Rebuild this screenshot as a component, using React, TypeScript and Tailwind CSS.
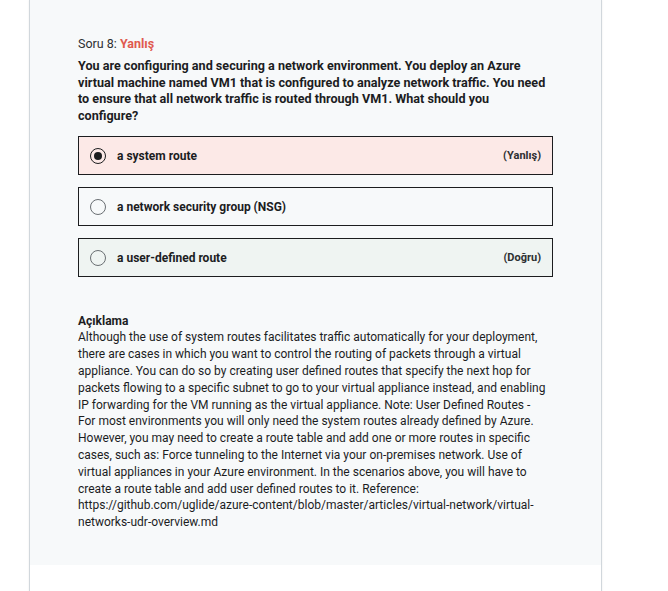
import React from "react";

const qLines = [
  "You are configuring and securing a network environment. You deploy an Azure",
  "virtual machine named VM1 that is configured to analyze network traffic. You need",
  "to ensure that all network traffic is routed through VM1. What should you",
  "configure?",
];

const expLines = [
  "Although the use of system routes facilitates traffic automatically for your deployment,",
  "there are cases in which you want to control the routing of packets through a virtual",
  "appliance. You can do so by creating user defined routes that specify the next hop for",
  "packets flowing to a specific subnet to go to your virtual appliance instead, and enabling",
  "IP forwarding for the VM running as the virtual appliance. Note: User Defined Routes -",
  "For most environments you will only need the system routes already defined by Azure.",
  "However, you may need to create a route table and add one or more routes in specific",
  "cases, such as: Force tunneling to the Internet via your on-premises network. Use of",
  "virtual appliances in your Azure environment. In the scenarios above, you will have to",
  "create a route table and add user defined routes to it. Reference:",
  "https://github.com/uglide/azure-content/blob/master/articles/virtual-network/virtual-",
  "networks-udr-overview.md",
];

function Radio({ checked }: { checked: boolean }) {
  return checked ? (
    <span className="flex h-[16px] w-[16px] items-center justify-center rounded-full border-[1.5px] border-[#1c1d1f]">
      <span className="h-[8px] w-[8px] rounded-full bg-[#1c1d1f]" />
    </span>
  ) : (
    <span className="h-[16px] w-[16px] rounded-full border border-[#6a6f73]" />
  );
}

function Option({
  label,
  checked,
  tag,
  bg,
}: {
  label: string;
  checked: boolean;
  tag?: string;
  bg: string;
}) {
  return (
    <div className={`flex h-[39px] items-center border border-[#1c1d1f] pl-[11px] pr-[11px] ${bg}`}>
      <Radio checked={checked} />
      <span className="ml-[11px] text-[12px] font-bold text-[#1c1d1f]">{label}</span>
      {tag && <span className="ml-auto text-[11px] font-bold text-[#2d2f31]">{tag}</span>}
    </div>
  );
}

export default function App() {
  return (
    <div className="h-[591px] w-[668px] overflow-hidden bg-white font-['Roboto','Liberation_Sans',sans-serif]">
      <div className="ml-[29px] w-[573px] border-x border-[#d1d7dc] shadow-[0_0_2px_rgba(0,0,0,0.08)]">
        <div className="bg-[#f7f9fa] pb-[34px] pl-[48px] pr-[48px] pt-[36px]">
          <div className="text-[12.5px] leading-[16px] text-[#2d2f31]">
            Soru 8: <span className="font-bold text-[#e05a4f]">Yanlış</span>
          </div>
          <div className="mt-[6px] text-[12.6px] font-bold leading-[16.6px] text-[#1c1d1f]">
            {qLines.map((l, i) => (
              <div key={i} className="whitespace-nowrap">{l}</div>
            ))}
          </div>
          <div className="mt-[12px] flex flex-col gap-[12px]">
            <Option label="a system route" checked tag="(Yanlış)" bg="bg-[#fce9e7]" />
            <Option label="a network security group (NSG)" checked={false} bg="bg-[#f7f9fa]" />
            <Option label="a user-defined route" checked={false} tag="(Doğru)" bg="bg-[#eff4f2]" />
          </div>
          <div className="mt-[37px] text-[12px] font-bold leading-[15px] text-[#1c1d1f]">Açıklama</div>
          <div className="text-[12px] leading-[16.8px] text-[#1c1d1f]">
            {expLines.map((l, i) => (
              <div key={i} className="whitespace-nowrap">{l}</div>
            ))}
          </div>
        </div>
        <div className="h-[30px] bg-white" />
      </div>
    </div>
  );
}
